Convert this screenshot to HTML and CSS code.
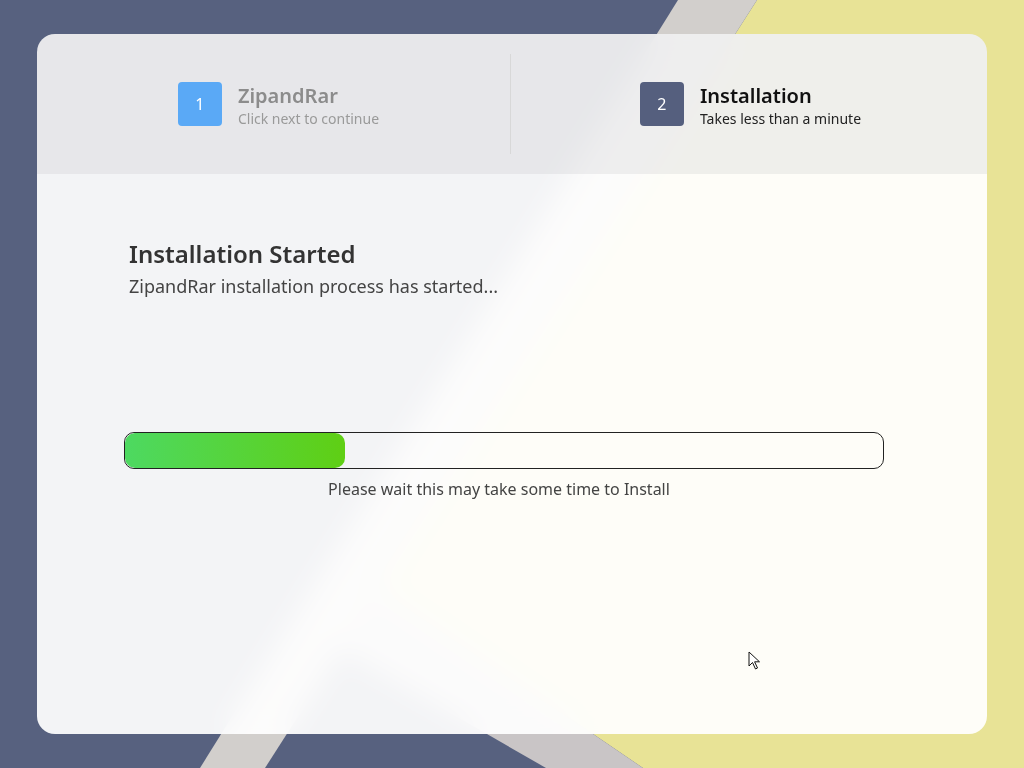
FILE: index.html
```html
<!DOCTYPE html>
<html lang="en">

<head>
    <meta charset="UTF-8">
    <meta name="viewport" content="width=device-width, initial-scale=1.0">
    <title>ZipandRar Setup</title>
    <link rel="stylesheet" href="styles.css">
</head>

<body>
    <!-- Backdrop -->
    <svg class="backdrop" viewBox="0 0 1024 768" preserveAspectRatio="none" aria-hidden="true">
        <rect width="1024" height="768" fill="#57617f" />
        <polygon points="757,0 1024,0 1024,768 643,768 380,589" fill="#e8e396" />
        <polygon points="678,0 757,0 265,768 200,768" fill="#d2cfcc" />
        <polygon points="341,650 380,589 643,768 546,768" fill="#c9c5c6" />
    </svg>

    <div class="setup-card">
        <!-- Steps -->
        <div class="steps">
            <div class="step done">
                <div class="step-num">1</div>
                <div class="step-text">
                    <div class="step-title">ZipandRar</div>
                    <div class="step-sub">Click next to continue</div>
                </div>
            </div>
            <div class="step-divider"></div>
            <div class="step active">
                <div class="step-num">2</div>
                <div class="step-text">
                    <div class="step-title">Installation</div>
                    <div class="step-sub">Takes less than a minute</div>
                </div>
            </div>
        </div>

        <!-- Content -->
        <div class="setup-body">
            <h1>Installation Started</h1>
            <p class="lead">ZipandRar installation process has started...</p>

            <div class="progress">
                <div class="progress-fill" style="width: 29%"></div>
            </div>
            <p class="hint">Please wait this may take some time to Install</p>
        </div>

        <!-- Mouse pointer -->
        <svg class="pointer" width="14" height="20" viewBox="0 0 14 20" aria-hidden="true">
            <path d="M1 1 L1 15 L4.5 11.5 L7.5 18 L9.5 17 L6.6 10.8 L11.5 10.8 Z" fill="#fff" stroke="#111" stroke-width="1" stroke-linejoin="round" />
        </svg>
    </div>
</body>

</html>
```

FILE: styles.css
```css
/* General */
body {
    margin: 0;
    padding: 34px 37px;
    height: 768px;
    box-sizing: border-box;
    overflow: hidden;
    font-family: 'Noto Sans', 'Open Sans', sans-serif;
    background: #57617f;
    position: relative;
}

.backdrop {
    position: absolute;
    left: 0;
    top: 0;
    width: 1024px;
    height: 768px;
    z-index: 0;
}

/* Card */
.setup-card {
    position: relative;
    z-index: 1;
    width: 950px;
    height: 700px;
    border-radius: 18px;
    overflow: hidden;
    display: flex;
    flex-direction: column;
    backdrop-filter: blur(14px);
}

/* Steps header */
.steps {
    height: 140px;
    background: rgba(239, 239, 240, 0.945);
    display: flex;
    align-items: center;
}

.step {
    flex: 1;
    display: flex;
    align-items: center;
    justify-content: center;
    gap: 16px;
}

.step.done {
    flex: 0 0 473px;
    box-sizing: border-box;
    padding-left: 10px;
}

.step.active {
    padding-left: 3px;
}

.step-divider {
    width: 1px;
    height: 100px;
    background: #d8d8d8;
}

.step-num {
    width: 44px;
    height: 44px;
    border-radius: 4px;
    display: flex;
    align-items: center;
    justify-content: center;
    color: #fff;
    font-size: 16px;
}

.step-text {
    margin-top: 4px;
}

.step.done .step-num {
    background: #5aa9f6;
}

.step.active .step-num {
    background: #555f7e;
}

.step-title {
    font-size: 20px;
    font-weight: 600;
    line-height: 26px;
}

.step-sub {
    font-size: 14px;
    line-height: 20px;
}

.step.done .step-title {
    color: #8c8c8c;
}

.step.done .step-sub {
    color: #9a9a9a;
}

.step.active .step-title {
    color: #111;
}

.step.active .step-sub {
    color: #222;
}

/* Body */
.setup-body {
    flex: 1;
    padding: 64px 0 0 87px;
    background: rgba(255, 255, 255, 0.93);
}

h1 {
    margin: 0 0 0 5px;
    font-size: 24px;
    font-weight: 600;
    line-height: 32px;
    color: #333;
}

.lead {
    margin: 0 0 0 5px;
    font-size: 18px;
    line-height: 32px;
    color: #444;
}

/* Progress */
.progress {
    margin-top: 130px;
    width: 758px;
    height: 35px;
    border: 1px solid #222;
    border-radius: 10px;
    overflow: hidden;
}

.progress-fill {
    height: 100%;
    border-radius: 10px;
    background: linear-gradient(90deg, #4dd961, #5fcf14);
}

.hint {
    margin: 10px 0 0;
    width: 760px;
    text-align: center;
    font-size: 16px;
    line-height: 20px;
    color: #444;
    padding-right: 10px;
    box-sizing: border-box;
}

.pointer {
    position: absolute;
    left: 711px;
    top: 617px;
}
```
